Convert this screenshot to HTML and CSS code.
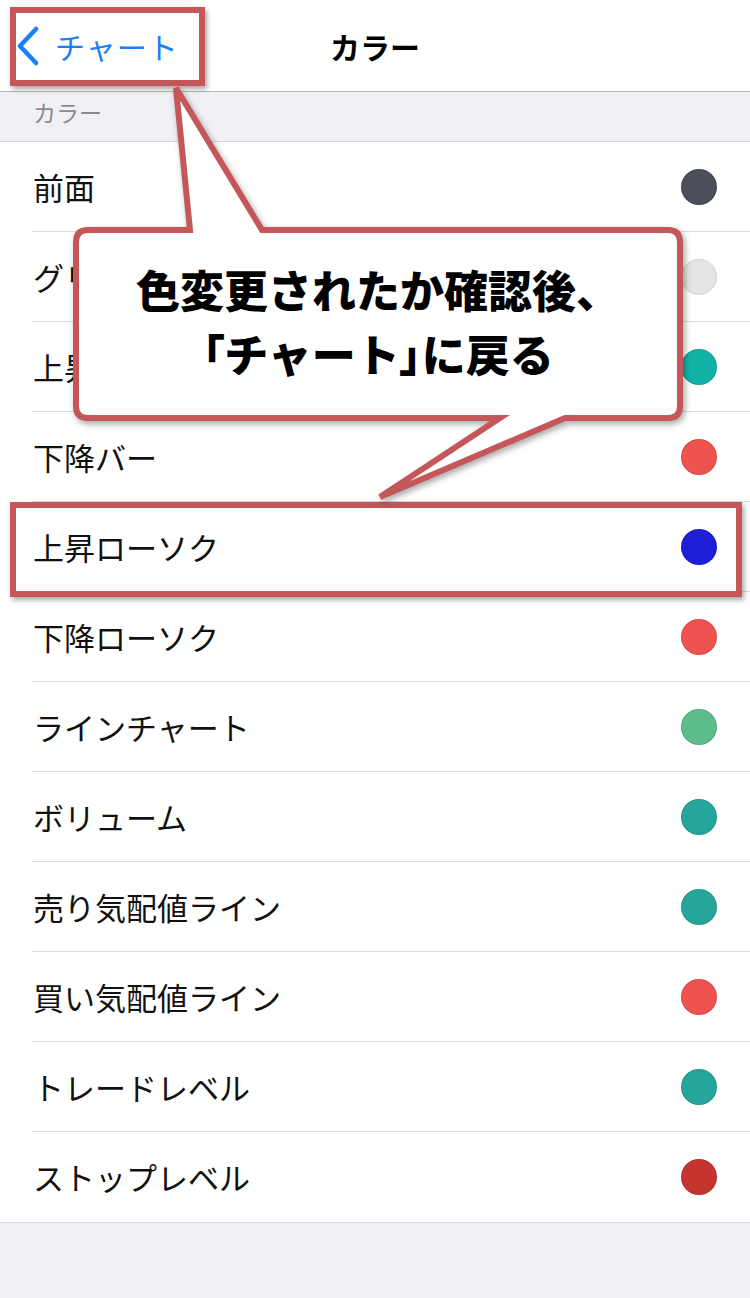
FILE: index.html
```html
<!DOCTYPE html>
<html lang="ja">
<head>
<meta charset="utf-8">
<link rel="stylesheet" href="styles.css">
</head>
<body>
<div class="page">
  <header class="nav">
    <div class="back">
      <svg class="chev" width="26" height="40" viewBox="0 0 26 40"><path d="M21 3 L5 20 L21 37" fill="none" stroke="#1a7ff5" stroke-width="4.5" stroke-linecap="round" stroke-linejoin="round"/></svg>
      <span class="back-text">チャート</span>
    </div>
    <div class="title">カラー</div>
  </header>
  <div class="section-head">カラー</div>
  <ul class="list">
    <li class="row"><span class="label">前面</span><span class="dot c-front"></span></li>
    <li class="row"><span class="label">グリッド</span><span class="dot c-grid"></span></li>
    <li class="row"><span class="label">上昇バー</span><span class="dot c-teal2"></span></li>
    <li class="row"><span class="label">下降バー</span><span class="dot c-red"></span></li>
    <li class="row"><span class="label">上昇ローソク</span><span class="dot c-blue"></span></li>
    <li class="row"><span class="label">下降ローソク</span><span class="dot c-red"></span></li>
    <li class="row"><span class="label">ラインチャート</span><span class="dot c-green"></span></li>
    <li class="row"><span class="label">ボリューム</span><span class="dot c-teal"></span></li>
    <li class="row"><span class="label">売り気配値ライン</span><span class="dot c-teal"></span></li>
    <li class="row"><span class="label">買い気配値ライン</span><span class="dot c-red"></span></li>
    <li class="row"><span class="label">トレードレベル</span><span class="dot c-teal"></span></li>
    <li class="row last"><span class="label">ストップレベル</span><span class="dot c-darkred"></span></li>
  </ul>

  <div class="mark mark-back"></div>
  <div class="mark mark-row"></div>
  <svg class="callout-shape" width="750" height="520" viewBox="0 0 750 520">
    <path d="M88 230 L190 230 L176 88 L262 230 L668 230 Q680 230 680 242 L680 406 Q680 418 668 418 L565 418 L380 497 L500 418 L88 418 Q76 418 76 406 L76 242 Q76 230 88 230 Z" fill="#ffffff" stroke="#c5575b" stroke-width="6" stroke-linejoin="miter"/>
  </svg>
  <div class="callout-text">色変更されたか確認後、<br><span class="br">「</span>チャート<span class="br">」</span>に戻る</div>
</div>
</body>
</html>
```
FILE: styles.css
```css
html, body {
  margin: 0;
  padding: 0;
}
body {
  background: #f0f0f5;
  font-family: "Noto Sans CJK JP", "Noto Sans", sans-serif;
  width: 750px;
  height: 1298px;
  overflow: hidden;
}
.page {
  position: relative;
  width: 750px;
  height: 1298px;
  background: #f0f0f5;
}
.nav {
  height: 92px;
  background: #ffffff;
  border-bottom: 1px solid #b8b8bc;
  box-sizing: border-box;
  display: flex;
  align-items: center;
  position: relative;
}
.back {
  display: flex;
  align-items: center;
  padding-left: 15px;
  gap: 14px;
  color: #1a7ff5;
}
.chev {
  display: block;
}
.back-text {
  font-size: 30px;
  line-height: 40px;
  letter-spacing: 1px;
}
.title {
  position: absolute;
  left: 0;
  right: 0;
  text-align: center;
  font-size: 30px;
  font-weight: bold;
  line-height: 40px;
  color: #000;
  pointer-events: none;
}
.section-head {
  height: 50px;
  box-sizing: border-box;
  padding: 7px 0 0 33px;
  font-size: 23px;
  line-height: 26px;
  color: #8a8a8e;
  background: #f0f0f5;
  border-bottom: 1px solid #d6d6da;
}
.list {
  list-style: none;
  margin: 0;
  padding: 0;
  background: #ffffff;
  border-bottom: 1px solid #d6d6da;
}
.row {
  height: 90px;
  margin-left: 32px;
  padding-right: 33px;
  box-sizing: border-box;
  display: flex;
  align-items: center;
  justify-content: space-between;
  border-bottom: 1px solid #dcdce0;
}
.row.last {
  border-bottom: none;
}
.label {
  font-size: 31px;
  color: #111;
  line-height: 40px;
  padding-left: 1px;
}
.dot {
  width: 36px;
  height: 36px;
  border-radius: 50%;
  box-sizing: border-box;
  border: 1.5px solid rgba(0,0,0,0.12);
}
.c-front { background: #4b4f5b; }
.c-grid { background: #e4e4e4; border-color: #cfcfcf; }
.c-teal2 { background: #12b3a6; }
.c-red { background: #ef5350; }
.c-blue { background: #1e1ed8; }
.c-green { background: #5cbd8b; }
.c-teal { background: #26a69a; }
.c-darkred { background: #c6342f; }

.mark {
  position: absolute;
  border: 6px solid #c5575b;
  box-sizing: border-box;
  box-shadow: 2px 3px 5px rgba(0,0,0,0.35);
}
.mark-back {
  left: 10px;
  top: 7px;
  width: 195px;
  height: 79px;
}
.mark-row {
  left: 10px;
  top: 502px;
  width: 732px;
  height: 95px;
}
.callout-shape {
  position: absolute;
  left: 0;
  top: 0;
  filter: drop-shadow(2px 3px 3px rgba(0,0,0,0.35));
}
.callout-text {
  position: absolute;
  left: 76px;
  top: 257px;
  width: 604px;
  text-align: center;
  font-size: 44px;
  line-height: 64px;
  font-weight: 900;
  color: #000;
  letter-spacing: 0;
}
.br {
  font-feature-settings: "palt";
}
```
